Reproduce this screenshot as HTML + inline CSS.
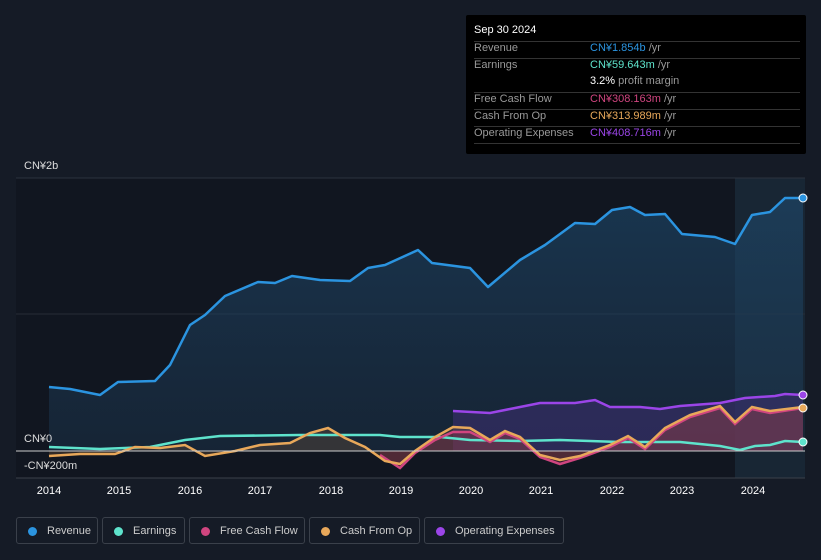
<!DOCTYPE html><html><head><style>
body{margin:0;width:821px;height:560px;background:#151b26;font-family:"Liberation Sans",sans-serif;overflow:hidden;position:relative}
.tt{position:absolute;left:466px;top:15px;width:340px;height:139px;background:#000;border-radius:2px;color:#ccc;font-size:11px}
.tt .h{position:absolute;left:8px;top:9px;color:#fff;font-size:11px}
.r{position:absolute;left:8px;width:326px;height:17px;border-top:1px solid #333;color:#999}
.r span{position:absolute;left:116px}
.lg{position:absolute;top:517px;height:27px;border:1px solid #3a404a;border-radius:3px;color:#ccc;font-size:11px;line-height:27px;box-sizing:border-box;padding-left:30px}
.lg i{position:absolute;left:11px;top:9px;width:9px;height:9px;border-radius:50%}
.yl{position:absolute;top:485px;color:#fff;font-size:11px;width:40px;text-align:center}
</style></head><body>
<svg width="821" height="560" style="position:absolute;left:0;top:0">
<defs><linearGradient id="g" x1="0" y1="0" x2="0" y2="1"><stop offset="0" stop-color="#1e4a6e" stop-opacity=".6"/><stop offset="1" stop-color="#1e3a55" stop-opacity=".4"/></linearGradient></defs>
<rect x="16" y="178" width="789" height="300" fill="#111620"/>
<rect x="735" y="178" width="70" height="300" fill="#1a2a3a" opacity=".8"/>
<line x1="16" y1="178" x2="805" y2="178" stroke="#2c333e"/>
<line x1="16" y1="314" x2="805" y2="314" stroke="#262c36"/>
<path d="M49,387 L70,389 100,395 118,382 155,381 170,365 190,325 205,315 225,296 258,282 275,283 292,276 320,280 350,281 368,268 385,265 418,250 432,263 470,268 488,287 520,260 545,245 575,223 595,224 612,210 630,207 645,215 665,214 682,234 715,237 735,244 752,215 770,212 785,198 803,198 L803,451 49,451Z" fill="url(#g)"/>
<path d="M453,411 490,413 510,409 540,403 575,403 595,400 610,407 640,407 660,409 680,406 720,403 745,398 775,396 785,394 803,395 L803,451 453,451Z" fill="#3a2f6e" opacity=".6"/>
<path d="M49,456 80,454 115,454 135,447 160,448 185,445 205,456 235,451 260,445 290,443 310,433 328,428 345,438 365,447 385,461 400,464 415,451 435,437 453,427 470,428 490,440 505,431 520,437 540,455 560,460 580,456 610,445 628,436 645,447 665,428 690,415 720,406 735,422 752,407 770,411 803,407 L803,451 49,451Z" fill="#7a5a3a" opacity=".3"/>
<path d="M380,455 400,468 415,453 435,440 453,432 470,432 490,442 505,433 520,439 540,457 560,464 580,458 610,447 628,438 645,449 665,430 690,417 720,408 735,424 752,409 770,413 803,408 L803,451 380,451Z" fill="#8a2a50" opacity=".35"/>
<path d="M49,387 L70,389 100,395 118,382 155,381 170,365 190,325 205,315 225,296 258,282 275,283 292,276 320,280 350,281 368,268 385,265 418,250 432,263 470,268 488,287 520,260 545,245 575,223 595,224 612,210 630,207 645,215 665,214 682,234 715,237 735,244 752,215 770,212 785,198 803,198" fill="none" stroke="#2b94e0" stroke-width="2.5" stroke-linejoin="round"/>
<path d="M453,411 490,413 510,409 540,403 575,403 595,400 610,407 640,407 660,409 680,406 720,403 745,398 775,396 785,394 803,395" fill="none" stroke="#9b45e8" stroke-width="2.5"/>
<path d="M49,447 100,449 150,447 185,440 220,436 300,435 380,435 400,437 440,437 470,440 520,441 560,440 620,442 680,442 720,446 740,450 755,446 770,445 785,441 803,442" fill="none" stroke="#5ee3cc" stroke-width="2.5"/>
<path d="M380,455 400,468 415,453 435,440 453,432 470,432 490,442 505,433 520,439 540,457 560,464 580,458 610,447 628,438 645,449 665,430 690,417 720,408 735,424 752,409 770,413 803,408" fill="none" stroke="#d0457f" stroke-width="2.5"/>
<path d="M49,456 80,454 115,454 135,447 160,448 185,445 205,456 235,451 260,445 290,443 310,433 328,428 345,438 365,447 385,461 400,464 415,451 435,437 453,427 470,428 490,440 505,431 520,437 540,455 560,460 580,456 610,445 628,436 645,447 665,428 690,415 720,406 735,422 752,407 770,411 803,407" fill="none" stroke="#e8a85a" stroke-width="2.5"/>
<line x1="16" y1="451" x2="805" y2="451" stroke="#ccc" stroke-width="1"/>
<line x1="16" y1="478" x2="805" y2="478" stroke="#3a404a"/>
<circle cx="803" cy="198" r="4" fill="#2b94e0" stroke="#fff"/>
<circle cx="803" cy="395" r="4" fill="#9b45e8" stroke="#fff"/>
<circle cx="803" cy="408" r="4" fill="#e8a85a" stroke="#fff"/>
<circle cx="803" cy="442" r="4" fill="#5ee3cc" stroke="#fff"/>
</svg>
<div style="position:absolute;left:24px;top:160px;color:#ddd;font-size:11px">CN¥2b</div>
<div style="position:absolute;left:24px;top:433px;color:#ddd;font-size:11px">CN¥0</div>
<div style="position:absolute;left:24px;top:460px;color:#ddd;font-size:11px">-CN¥200m</div>
<div class="yl" style="left:29px">2014</div><div class="yl" style="left:99px">2015</div><div class="yl" style="left:170px">2016</div><div class="yl" style="left:240px">2017</div><div class="yl" style="left:311px">2018</div><div class="yl" style="left:381px">2019</div><div class="yl" style="left:451px">2020</div><div class="yl" style="left:521px">2021</div><div class="yl" style="left:592px">2022</div><div class="yl" style="left:662px">2023</div><div class="yl" style="left:733px">2024</div>
<div class="tt"><div class="h">Sep 30 2024</div>
<div class="r" style="top:26px">Revenue<span style="color:#2b94e0">CN¥1.854b <b style="color:#999;font-weight:normal">/yr</b></span></div>
<div class="r" style="top:43px">Earnings<span style="color:#5ee3cc">CN¥59.643m <b style="color:#999;font-weight:normal">/yr</b></span></div>
<div class="r" style="top:60px;border:none"><span style="color:#fff">3.2% <b style="color:#999;font-weight:normal">profit margin</b></span></div>
<div class="r" style="top:77px">Free Cash Flow<span style="color:#d0457f">CN¥308.163m <b style="color:#999;font-weight:normal">/yr</b></span></div>
<div class="r" style="top:94px">Cash From Op<span style="color:#e8a85a">CN¥313.989m <b style="color:#999;font-weight:normal">/yr</b></span></div>
<div class="r" style="top:111px">Operating Expenses<span style="color:#9b45e8">CN¥408.716m <b style="color:#999;font-weight:normal">/yr</b></span></div>
<div class="r" style="top:128px;height:0"></div>
</div>
<div class="lg" style="left:16px;width:82px"><i style="background:#2b94e0"></i>Revenue</div>
<div class="lg" style="left:102px;width:83px"><i style="background:#5ee3cc"></i>Earnings</div>
<div class="lg" style="left:189px;width:116px"><i style="background:#d0457f"></i>Free Cash Flow</div>
<div class="lg" style="left:309px;width:111px"><i style="background:#e8a85a"></i>Cash From Op</div>
<div class="lg" style="left:424px;width:140px"><i style="background:#9b45e8"></i>Operating Expenses</div>
</body></html>
